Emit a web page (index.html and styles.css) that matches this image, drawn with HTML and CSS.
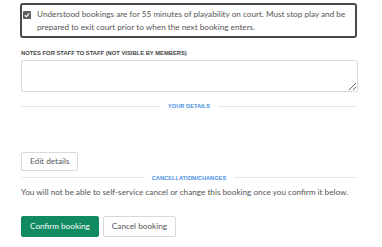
FILE: index.html
```html
<!doctype html>
<html>
  <head>
    <title>Confirm booking</title>
    <meta charset='utf-8'>
    <link rel="stylesheet" href="styles.css">
  </head>
  <body>
    <div class='bk-page'>
      <label class='bk-ack'>
        <svg class='bk-check' width='8' height='8' viewBox='0 0 8 8'>
          <rect width='8' height='8' rx='1' fill='#5f6063'/>
          <path d='M1.8 4.2 L3.4 5.7 L6.3 2.3' fill='none' stroke='#fff' stroke-width='1.2'/>
        </svg>
        <span class='bk-ack-text'>Understood bookings are for 55 minutes of playability on court. Must stop play and be prepared to exit court prior to when the next booking enters.</span>
      </label>

      <div class='bk-label'>Notes for staff to staff (not visible by members)</div>
      <textarea class='bk-notes'></textarea>

      <div class='bk-divider'><span>Your details</span></div>
      <div class='bk-details'></div>
      <button class='bk-btn bk-edit'>Edit details</button>

      <div class='bk-divider bk-divider-tight'><span>Cancellation/changes</span></div>
      <p class='bk-note'>You will not be able to self-service cancel or change this booking once you confirm it below.</p>

      <div class='bk-actions'>
        <button class='bk-btn bk-primary'>Confirm booking</button>
        <button class='bk-btn'>Cancel booking</button>
      </div>
    </div>
  </body>
</html>
```

FILE: styles.css
```css
body {
  margin: 0;
  background-color: #fff;
  color: #555;
  font-family: Lato, sans-serif;
}
.bk-page {
  width: 336px;
  padding: 3px 0 0 21px;
}
.bk-ack {
  display: flex;
  align-items: flex-start;
  gap: 6px;
  border: 2px solid #4a4a4a;
  border-radius: 3px;
  padding: 3px 6px 2px 1px;
  margin-left: -1px;
  font-size: 8.2px;
  line-height: 13px;
  color: #555;
}
.bk-check {
  flex: none;
  margin-top: 3px;
}
.bk-label {
  margin-top: 11px;
  font-family: 'Liberation Sans', sans-serif;
  font-size: 5.8px;
  font-weight: bold;
  text-transform: uppercase;
  color: #444;
  line-height: 8px;
}
.bk-notes {
  display: block;
  box-sizing: border-box;
  width: 337px;
  height: 32px;
  margin: 3px 0 0;
  border: 1px solid #dcdcdc;
  border-radius: 2px;
  resize: vertical;
}
.bk-divider {
  display: flex;
  align-items: center;
  gap: 8px;
  margin-top: 10px;
  font-family: 'Liberation Sans', sans-serif;
  font-size: 5.7px;
  font-weight: bold;
  text-transform: uppercase;
  color: #4a90e2;
  line-height: 8px;
}
.bk-divider::before,
.bk-divider::after {
  content: '';
  flex: 1;
  height: 1px;
  background-color: #e6e6e6;
}
.bk-details {
  height: 38px;
}
.bk-btn {
  box-sizing: border-box;
  height: 19px;
  padding: 0 6px;
  border: 1px solid #d9d9d9;
  border-radius: 2px;
  background-color: #fff;
  color: #555;
  font-family: Lato, sans-serif;
  font-size: 8.2px;
}
.bk-edit {
  padding: 0 8px;
}
.bk-divider-tight {
  margin-top: 3px;
}
.bk-note {
  margin: 4px 0 0;
  font-size: 8.2px;
  line-height: 12px;
}
.bk-actions {
  display: flex;
  gap: 4px;
  margin-top: 18px;
}
.bk-actions .bk-btn {
  height: 21px;
  padding: 0 8px;
}
.bk-primary {
  background-color: #108a60;
  border-color: #108a60;
  color: #fff;
}
```
